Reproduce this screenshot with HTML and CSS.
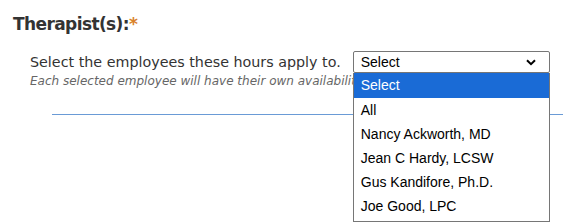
FILE: index.html
```html
<!DOCTYPE html>
<html lang="en">
<head>
  <meta charset="UTF-8">
  <title>Therapists</title>
  <link rel="stylesheet" href="styles.css">
</head>
<body>
  <h3 class="field-title">Therapist(s):<span class="req">*</span></h3>

  <div class="field">
    <div class="field-row">
      <label class="field-label">Select the employees these hours apply to.</label>
      <div class="select-wrap">
        <div class="select">
          <span>Select</span>
          <svg class="caret" width="10" height="7" viewBox="0 0 10 7"><path d="M1 1.2 L5 5.2 L9 1.2" fill="none" stroke="#000" stroke-width="2"/></svg>
        </div>
        <ul class="options">
          <li class="active">Select</li>
          <li>All</li>
          <li>Nancy Ackworth, MD</li>
          <li>Jean C Hardy, LCSW</li>
          <li>Gus Kandifore, Ph.D.</li>
          <li>Joe Good, LPC</li>
        </ul>
      </div>
    </div>
    <div class="hint">Each selected employee will have their own availability</div>
  </div>

  <div class="divider"></div>
</body>
</html>
```

FILE: styles.css
```css
html, body { height: 100%; }
body { margin: 0; padding: 14px 0 0 13px; box-sizing: border-box; font-family: "DejaVu Sans", Verdana, sans-serif; color: #333; background: #fff; }

.field-title { margin: 0; font-size: 17px; line-height: 20px; font-weight: bold; letter-spacing: -0.6px; color: #333; }
.req { color: #d9822b; }

.field { padding: 17px 0 0 17px; }
.field-row { display: flex; align-items: center; }
.field-label { font-size: 14.3px; color: #333; white-space: nowrap; }
.hint { font-size: 12px; font-style: italic; color: #666; white-space: nowrap; margin-top: 1px; }

.select-wrap { position: relative; margin-left: 12px; }
.select {
  width: 197px;
  height: 22px;
  box-sizing: border-box;
  border: 1px solid #767676;
  border-radius: 2px;
  display: flex;
  align-items: center;
  justify-content: space-between;
  padding: 0 13px 0 7px;
  font-family: "Liberation Sans", Arial, sans-serif;
  font-size: 14px;
  color: #000;
}

.options {
  position: absolute;
  top: 22px;
  left: 0;
  width: 197px;
  box-sizing: border-box;
  margin: 0;
  padding: 0 0 3px;
  list-style: none;
  background: #fff;
  border: 1px solid #767676;
  border-top: none;
  font-family: "Liberation Sans", Arial, sans-serif;
  font-size: 14px;
  color: #000;
  z-index: 2;
}
.options li { height: 24px; line-height: 24px; padding: 0 7px; white-space: nowrap; }
.options li.active { background: #1a6bd6; color: #fff; height: 25px; line-height: 25px; }

.divider { margin: 26px 0 0 39px; border-top: 1px solid #6a9bd6; }
```
